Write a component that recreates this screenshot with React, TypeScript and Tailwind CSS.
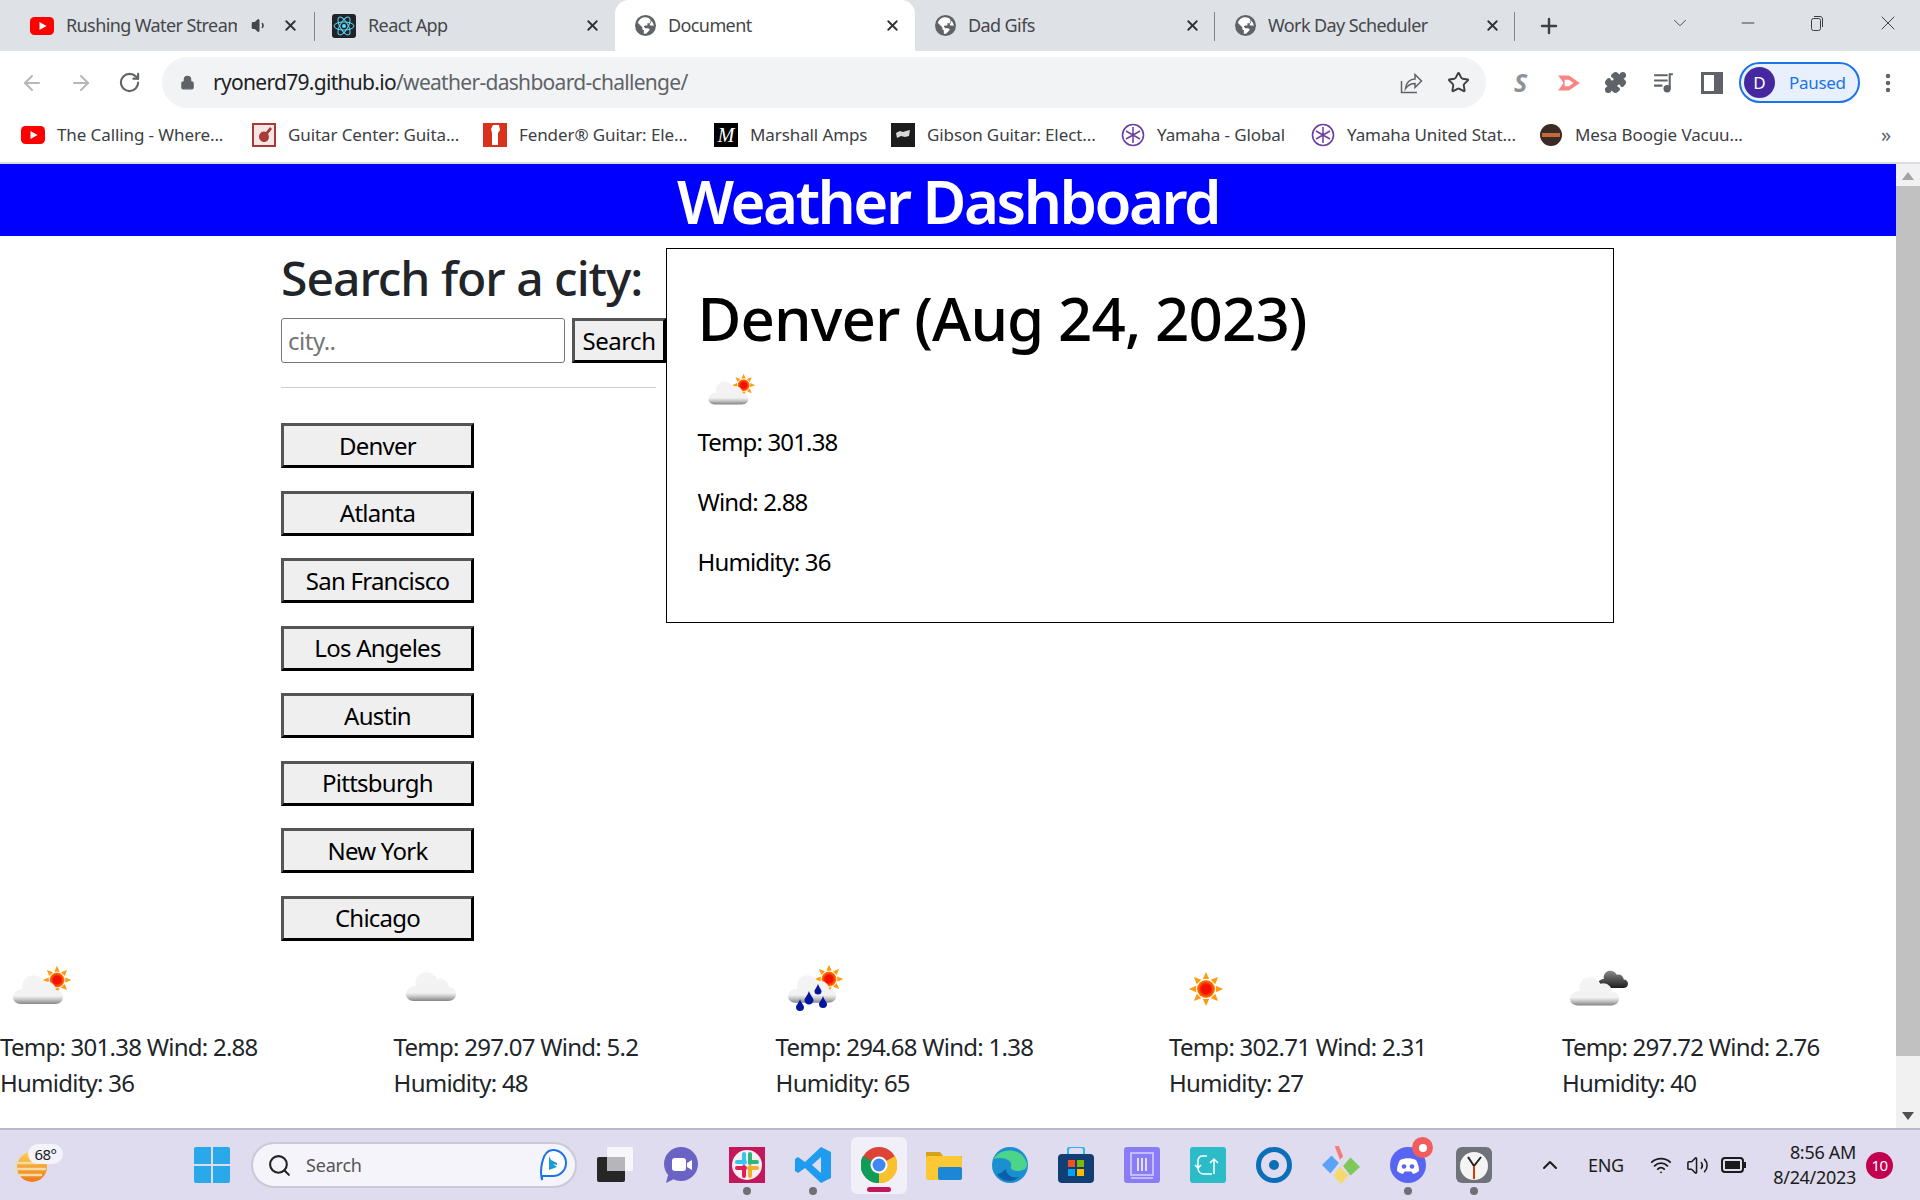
import { ArrowLeft, ArrowRight, ChevronDown, ChevronUp, Lock, Minus, MoreVertical, Plus, Puzzle, RotateCw, Search, Star, Volume1, Volume2, Wifi, X } from 'lucide-react'

type Kind = 'few' | 'scattered' | 'rain' | 'clear' | 'broken'

const cloudPath = 'M8 30H42C47 30 50 27 50 23C50 19 47 16 43 16C42 9 36 6 31 8C28 1 18 -1 13 4C9 8 9 12 10 15C4 15 0 19 0 23C0 27 3 30 8 30Z'

function Cloud({ x, y, scale = 1, dark = false }: { x: number; y: number; scale?: number; dark?: boolean }) {
  return <path d={cloudPath} transform={`translate(${x} ${y}) scale(${scale})`} fill={dark ? 'url(#cloud-dark)' : 'url(#cloud-light)'} />
}

function Sun({ cx, cy, r }: { cx: number; cy: number; r: number }) {
  const rays = [0, 45, 90, 135, 180, 225, 270, 315]
  return (
    <g>
      {rays.map((a) => (
        <polygon key={a} points={`${cx - r * 0.35},${cy - r * 1.1} ${cx},${cy - r * 1.9} ${cx + r * 0.35},${cy - r * 1.1}`} fill="#ff9a12" transform={`rotate(${a} ${cx} ${cy})`} />
      ))}
      <circle cx={cx} cy={cy} r={r} fill="url(#sun-core)" />
    </g>
  )
}

function WeatherIcon({ kind, size = 75 }: { kind: Kind; size?: number }) {
  return (
    <svg width={size} height={size} viewBox="0 0 75 75" className="block shrink-0">
      <defs>
        <linearGradient id="cloud-light" x1="0" y1="0" x2="0" y2="1">
          <stop offset="0" stopColor="#f4f4f4" />
          <stop offset="0.72" stopColor="#f2f2f2" />
          <stop offset="0.84" stopColor="#c8c8c8" />
          <stop offset="1" stopColor="#858585" />
        </linearGradient>
        <linearGradient id="cloud-dark" x1="0" y1="0" x2="0" y2="1">
          <stop offset="0" stopColor="#8a8a8a" />
          <stop offset="1" stopColor="#1d1d1d" />
        </linearGradient>
        <radialGradient id="sun-core">
          <stop offset="0.5" stopColor="#f50f00" />
          <stop offset="1" stopColor="#ff8a00" />
        </radialGradient>
      </defs>
      {kind === 'few' && (
        <>
          <Sun cx={57} cy={29} r={7.5} />
          <Cloud x={13} y={23} />
        </>
      )}
      {kind === 'scattered' && <Cloud x={12} y={20} />}
      {kind === 'rain' && (
        <>
          <Sun cx={53} cy={28} r={7.5} />
          <Cloud x={12} y={23} scale={0.96} />
          {[
            [24, 56, 4],
            [33, 49, 4.500],
            [47, 53, 4],
            [42, 40, 3.500],
          ].map(([cx, cy, r]) => (
            <path key={`${cx}-${cy}`} d={`M${cx} ${cy - r * 2}C${cx + r * 0.3} ${cy - r} ${cx + r} ${cy - r * 0.4} ${cx + r} ${cy}A${r} ${r} 0 1 1 ${cx - r} ${cy}C${cx - r} ${cy - r * 0.4} ${cx - r * 0.3} ${cy - r} ${cx} ${cy - r * 2}Z`} fill="#07169e" />
          ))}
        </>
      )}
      {kind === 'clear' && <Sun cx={37} cy={38} r={9} />}
      {kind === 'broken' && (
        <>
          <Cloud x={36} y={19} scale={0.6} dark />
          <Cloud x={8} y={25} scale={0.98} />
        </>
      )}
    </svg>
  )
}

function GlobeIcon() {
  return (
    <svg width="21" height="21" viewBox="0 0 20 20" className="shrink-0">
      <circle cx="10" cy="10" r="10" fill="#5f6368" />
      <path d="M9 2.2C6 2.6 3.6 4.6 2.6 7.3L7 11.6V13c0 .8.6 1.4 1.4 1.4v3.3C9.2 18 10 17.9 10.8 17.7L14 14.4c0-1-.8-1.8-1.8-1.8H9.8L8.4 11l1-1h2.4V7.8h1.6c.7 0 1.3-.6 1.3-1.3V4.2C13.4 2.9 11.300 2 9 2.200Z" fill="#fff" />
      <path d="M15.600 5.400 14.800 8h-1l.6 2h2.400l1 .8c.1-2-.700-3.900-2.200-5.400Z" fill="#fff" />
    </svg>
  )
}

function YoutubeIcon() {
  return (
    <svg width="24" height="18" viewBox="0 0 24 18" className="shrink-0">
      <rect width="24" height="18" rx="4.500" fill="#f00" />
      <path d="M9.500 5v8l7-4z" fill="#fff" />
    </svg>
  )
}

function ReactIcon() {
  return (
    <svg width="24" height="24" viewBox="0 0 24 24" className="shrink-0">
      <rect width="24" height="24" rx="3" fill="#20232a" />
      <circle cx="12" cy="12" r="2" fill="#61dafb" />
      <g fill="none" stroke="#61dafb" strokeWidth="1">
        <ellipse cx="12" cy="12" rx="10" ry="4" />
        <ellipse cx="12" cy="12" rx="10" ry="4" transform="rotate(60 12 12)" />
        <ellipse cx="12" cy="12" rx="10" ry="4" transform="rotate(120 12 12)" />
      </g>
    </svg>
  )
}

const tabs = [
  { title: 'Rushing Water Stream', icon: <YoutubeIcon />, sound: true, iconClass: '', padding: 'pr-[16px]' },
  { title: 'React App', icon: <ReactIcon />, iconClass: 'ml-[2px]', padding: 'pr-[14px]' },
  { title: 'Document', icon: <GlobeIcon />, active: true, iconClass: 'ml-[5px]', padding: 'pr-[14px]' },
  { title: 'Dad Gifs', icon: <GlobeIcon />, iconClass: 'ml-[5px]', padding: 'pr-[14px]' },
  { title: 'Work Day Scheduler', icon: <GlobeIcon />, iconClass: 'ml-[5px]', padding: 'pr-[14px]' },
]

function TabBar() {
  return (
    <div className="flex h-[51px] shrink-0 items-center bg-[#dee1e6] pl-[15px] text-[18px] text-[#45474a]">
      {tabs.map((tab, i) => (
        <div key={tab.title} className={`flex h-full w-[300px] items-center pl-[15px] ${tab.padding} ${tab.active ? 'rounded-t-[14px] bg-white' : 'relative'}`}>
          <span className={`flex shrink-0 ${tab.iconClass}`}>{tab.icon}</span>
          <span className="ml-[12px] min-w-0 flex-1 overflow-hidden whitespace-nowrap tracking-[-0.6px]">{tab.title}</span>
          {tab.sound && <Volume1 size={17} fill="#45474a" className="ml-[14px] mr-[14px] shrink-0" />}
          <X size={17} strokeWidth={2.6} className="shrink-0 text-[#303134]" />
          {(i === 0 || i === 3 || i === 4) && <span className="absolute right-0 top-[12px] h-[29px] w-px bg-[#80868b]" />}
        </div>
      ))}
      <Plus size={24} strokeWidth={2.4} className="ml-[22px] text-[#3c4043]" />
      <div className="ml-auto flex items-center pb-[6px] text-[#3c4043]">
        <ChevronDown size={22} strokeWidth={1} className="mr-[47px]" />
        <Minus size={20} strokeWidth={1.2} className="mr-[50px]" />
        <svg width="18" height="18" viewBox="0 0 18 18" fill="none" stroke="currentColor" className="mr-[50px]">
          <rect x="3.500" y="4.500" width="9" height="12" rx="2" />
          <path d="M6 2.500h6c1.500 0 2.500 1 2.500 2.500v8" />
        </svg>
        <X size={24} strokeWidth={1} className="mr-[20px]" />
      </div>
    </div>
  )
}

function Toolbar() {
  return (
    <div className="flex h-[62px] shrink-0 items-center bg-white pl-[20px] pr-[20px] pt-[1px] text-[#5f6368]">
      <ArrowLeft size={24} strokeWidth={2} className="text-[#b5b7ba]" />
      <ArrowRight size={24} strokeWidth={2} className="ml-[25px] text-[#b5b7ba]" />
      <RotateCw size={23} strokeWidth={2.2} className="ml-[25px] text-[#5f6368]" />
      <div className="ml-[21px] flex h-[51px] w-[1324px] items-center rounded-full bg-[#f1f3f4] pl-[18px] pr-[16px]">
        <Lock size={15} fill="#5f6368" className="shrink-0" />
        <span className="ml-[18px] whitespace-nowrap text-[21px] tracking-[-0.7px]">
          <span className="text-[#202124]">ryonerd79.github.io</span>/weather-dashboard-challenge/
        </span>
        <svg width="24" height="24" viewBox="0 0 24 24" fill="none" stroke="#5f6368" strokeWidth="1.500" className="ml-auto">
          <path d="M2.500 10v11.500h15.500" />
          <path d="M6.500 17.500c.5-6 4.500-9.500 9.500-9.500V3.500l6.500 6.500-6.500 6.500V12.500c-4 0-7 1.500-9.500 5z" />
        </svg>
        <Star size={23} strokeWidth={2} className="ml-[24px] text-[#3c4043]" />
      </div>
      <span className="ml-[28px] w-[20px] text-[25px] font-bold italic text-[#8e9195]">S</span>
      <svg width="26" height="26" viewBox="0 0 24 24" className="ml-[22px]">
        <path d="M2 5h10l10 7-10 7H2l5-7z" fill="#fb8585" />
        <path d="M8 9h4l4 3-4 3H8z" fill="#fff" />
      </svg>
      <Puzzle size={23} fill="#5f6368" className="ml-[22px]" />
      <svg width="25" height="25" viewBox="0 0 24 24" fill="none" stroke="#5f6368" strokeWidth="2" className="ml-[25px]">
        <path d="M2 5h13M2 10h13M2 15h8" />
        <path d="M20 4h-3v14" />
        <circle cx="14.500" cy="18" r="2.500" fill="#5f6368" />
      </svg>
      <svg width="22" height="22" viewBox="0 0 22 22" className="ml-[24px]">
        <path d="M0 0h22v22H0zM3 3v16h10V3z" fill="#5f6368" fillRule="evenodd" />
      </svg>
      <div className="ml-[16px] flex h-[41px] w-[121px] items-center rounded-full border-2 border-[#1a73e8] bg-[#e8f0fe] pl-[3px]">
        <span className="flex h-[31px] w-[31px] items-center justify-center rounded-full bg-[#4527a0] text-[17px] text-white">D</span>
        <span className="ml-[14px] text-[17px] tracking-[-0.3px] text-[#1a73e8]">Paused</span>
      </div>
      <MoreVertical size={24} strokeWidth={2.5} className="ml-[16px]" />
    </div>
  )
}

function GuitarCenterIcon() {
  return (
    <svg width="24" height="24" viewBox="0 0 24 24" className="shrink-0">
      <rect width="24" height="24" fill="#a83a3a" />
      <rect x="2" y="2" width="20" height="20" fill="#f4e6e2" />
      <path d="M7 14a5 5 0 0 1 7-5l4-5 2 2-4 5a5 5 0 1 1-9 3z" fill="#a83a3a" />
    </svg>
  )
}

function FenderIcon() {
  return (
    <svg width="24" height="24" viewBox="0 0 24 24" className="shrink-0">
      <rect width="24" height="24" fill="#d8321c" />
      <path d="M10 2h6l1 5-2 3v12H9V10L8 6z" fill="#fff" />
    </svg>
  )
}

function MarshallIcon() {
  return <span className="flex h-[24px] w-[24px] shrink-0 items-center justify-center bg-black font-['Liberation_Serif',serif] text-[20px] italic text-white">M</span>
}

function GibsonIcon() {
  return (
    <svg width="24" height="24" viewBox="0 0 24 24" className="shrink-0">
      <rect width="24" height="24" fill="#1c1c1c" />
      <path d="M5 10l4-2 3 1 3-1 4-1-1 6-4 1-4-1-4 2z" fill="#d8d8d8" />
    </svg>
  )
}

function YamahaIcon() {
  return (
    <svg width="24" height="24" viewBox="0 0 24 24" fill="none" stroke="#6b3fa0" className="shrink-0">
      <circle cx="12" cy="12" r="10.500" strokeWidth="1.600" />
      <path d="M12 4v16M5 8l14 8M19 8 5 16" strokeWidth="1.500" />
    </svg>
  )
}

const bookmarks = [
  { label: 'The Calling - Where...', icon: <YoutubeIcon />, width: 'w-[231px]' },
  { label: 'Guitar Center: Guita...', icon: <GuitarCenterIcon />, width: 'w-[231px]' },
  { label: 'Fender® Guitar: Ele...', icon: <FenderIcon />, width: 'w-[231px]' },
  { label: 'Marshall Amps', icon: <MarshallIcon />, width: 'w-[177px]' },
  { label: 'Gibson Guitar: Elect...', icon: <GibsonIcon />, width: 'w-[230px]' },
  { label: 'Yamaha - Global', icon: <YamahaIcon />, width: 'w-[190px]' },
  { label: 'Yamaha United Stat...', icon: <YamahaIcon />, width: 'w-[228px]' },
  {
    label: 'Mesa Boogie Vacuu...',
    icon: (
      <svg width="24" height="24" viewBox="0 0 24 24" className="shrink-0">
        <circle cx="12" cy="12" r="11" fill="#3b2a24" />
        <rect x="3" y="10" width="18" height="4" fill="#c06a3c" />
      </svg>
    ),
    width: 'w-[320px]',
  },
]

function BookmarksBar() {
  return (
    <div className="flex h-[51px] shrink-0 items-center border-b-2 border-[#dadce0] pb-[5px] pl-[21px] text-[17px] tracking-[-0.1px] text-[#3c4043]">
      {bookmarks.map((b) => (
        <div key={b.label} className={`flex items-center gap-[12px] whitespace-nowrap ${b.width}`}>
          {b.icon}
          <span>{b.label}</span>
        </div>
      ))}
      <span className="ml-auto mr-[29px] text-[20px] text-[#5f6368]">»</span>
    </div>
  )
}

const cities = ['Denver', 'Atlanta', 'San Francisco', 'Los Angeles', 'Austin', 'Pittsburgh', 'New York', 'Chicago']

const forecast: { kind: Kind; temp: string; wind: string; humidity: string; width: string }[] = [
  { kind: 'few', temp: '301.38', wind: '2.88', humidity: '36', width: 'w-[393.6px]' },
  { kind: 'scattered', temp: '297.07', wind: '5.2', humidity: '48', width: 'w-[382px]' },
  { kind: 'rain', temp: '294.68', wind: '1.38', humidity: '65', width: 'w-[393.4px]' },
  { kind: 'clear', temp: '302.71', wind: '2.31', humidity: '27', width: 'w-[393px]' },
  { kind: 'broken', temp: '297.72', wind: '2.76', humidity: '40', width: 'w-[334px]' },
]

function Dashboard() {
  return (
    <div className="flex min-w-0 flex-1 flex-col bg-white text-[24px] leading-[36px] text-[#212529]">
      <h1 className="h-[72px] shrink-0 bg-[#0000ff] text-center text-[60px] font-semibold leading-[75px] tracking-[-2.5px] text-white">Weather Dashboard</h1>
      <div className="flex h-[714px] shrink-0 pl-[281px]">
        <div className="w-[385px] shrink-0">
          <h2 className="mt-[11px] h-[71px] whitespace-nowrap text-[48px] font-medium leading-[62px] tracking-[-1px]">Search for a city:</h2>
          <div className="flex">
            <input placeholder="city.." className="h-[45px] w-[284px] rounded-[3px] border border-[#767676] bg-white px-[6px] text-[24px] tracking-[-0.5px] outline-none placeholder:text-[#757575]" readOnly />
            <button className="ml-[7px] h-[45px] w-[94px] border-[3px] border-b-black border-l-[#555] border-r-black border-t-[#555] bg-[#efefef] text-[24px] leading-none tracking-[-0.5px] text-black">Search</button>
          </div>
          <hr className="mr-[10px] mt-[24px] border-[#cfcfcf]" />
          <div className="mt-[35px] flex flex-col gap-[22.5px]">
            {cities.map((city) => (
              <button key={city} className="h-[45px] w-[193px] border-[3px] border-b-black border-l-[#555] border-r-black border-t-[#555] bg-[#efefef] text-[24px] leading-none tracking-[-0.75px] text-black">
                {city}
              </button>
            ))}
          </div>
        </div>
        <div className="mt-[12px] flex h-[375px] w-[948px] shrink-0 flex-col border-[1.5px] border-black pl-[30.500px] pt-[32.500px] text-[24px] tracking-[-0.85px] text-black">
          <h2 className="text-[60px] font-medium leading-[72px] tracking-[-0.9px]">Denver (Aug 24, 2023)</h2>
          <div className="mt-[8px]">
            <WeatherIcon kind="few" size={60} />
          </div>
          <p className="mt-[2px]">Temp: 301.38</p>
          <p className="mt-[24px]">Wind: 2.88</p>
          <p className="mt-[24px]">Humidity: 36</p>
        </div>
      </div>
      <div className="flex">
        {forecast.map((day) => (
          <div key={day.temp} className={`shrink-0 pt-[1px] tracking-[-0.75px] ${day.width}`}>
            <WeatherIcon kind={day.kind} />
            <p className="mt-[3px] whitespace-nowrap">
              Temp: {day.temp} Wind: {day.wind}
            </p>
            <p className="whitespace-nowrap">Humidity: {day.humidity}</p>
          </div>
        ))}
      </div>
    </div>
  )
}

function Scrollbar() {
  return (
    <div className="flex w-[24px] shrink-0 flex-col items-center bg-[#f1f1f1]">
      <span className="mt-[8px] h-0 w-0 border-x-[6px] border-b-[8px] border-x-transparent border-b-[#a3a3a3]" />
      <div className="mt-[6px] h-[870px] w-full bg-[#c1c1c1]" />
      <span className="mb-[8px] mt-auto h-0 w-0 border-x-[6px] border-t-[8px] border-x-transparent border-t-[#505050]" />
    </div>
  )
}

const appIcons = [
  <svg key="view" width="36" height="36" viewBox="0 0 36 36"><rect x="10" y="0" width="26" height="24" rx="2" fill="#f7f7f9" /><rect y="10" width="28" height="25" rx="2" fill="#262626" /><rect x="10" y="10" width="18" height="14" fill="#b5b5ba" /></svg>,
  <svg key="meet" width="36" height="36" viewBox="0 0 36 36"><ellipse cx="18" cy="17" rx="17" ry="17" fill="#6b63c4" /><path d="M5 28l-2 8 8-4z" fill="#6b63c4" /><rect x="9" y="11" width="14" height="13" rx="3" fill="#fff" /><path d="M24 16l5-3v10l-5-3z" fill="#fff" /></svg>,
  <svg key="slack" width="36" height="36" viewBox="0 0 36 36"><rect width="36" height="36" fill="#c2185b" /><circle cx="18" cy="18" r="15" fill="#f6eef0" /><path d="M15 7v9M8 15h8" stroke="#36c5f0" strokeWidth="4" strokeLinecap="round" /><path d="M21 7v9M21 15h7" stroke="#2eb67d" strokeWidth="4" strokeLinecap="round" /><path d="M21 29v-9M28 21h-8" stroke="#ecb22e" strokeWidth="4" strokeLinecap="round" /><path d="M15 29v-9M8 21h8" stroke="#e01e5a" strokeWidth="4" strokeLinecap="round" /></svg>,
  <svg key="code" width="36" height="36" viewBox="0 0 36 36"><path d="M26 0l10 5v26l-10 5-16-15-7 5-3-2V12l3-2 7 5zM26 10l-9 8 9 8z" fill="#1f9cf0" fillRule="evenodd" /></svg>,
]

const appIconsAfter = [
  <svg key="folder" width="36" height="36" viewBox="0 0 36 36"><path d="M0 5h14l3 4h19v6H0z" fill="#d9a21b" /><rect y="9" width="36" height="24" rx="2" fill="#fcc934" /><rect x="12" y="20" width="24" height="13" rx="2" fill="#1c87d6" /></svg>,
  <svg key="edge" width="36" height="38" viewBox="0 0 36 36"><circle cx="18" cy="18" r="18" fill="#1c8fd1" /><path d="M2 12C6 2 30-2 35 17c0 5-4 7-10 7-5 0-7-3-6-5 2-5-7-10-17-7z" fill="#4cd48b" /><path d="M14 22c0 6 7 10 13 8-6 6-17 5-22-3 2 0 6-2 9-5z" fill="#0a5fa8" /></svg>,
  <svg key="store" width="36" height="36" viewBox="0 0 36 36"><path d="M10 8V3c0-2 1-3 3-3h10c2 0 3 1 3 3v5" fill="none" stroke="#29b6f6" strokeWidth="2" /><rect y="7" width="36" height="29" rx="4" fill="#123f73" /><rect x="10" y="13" width="7" height="7" fill="#f25022" /><rect x="19" y="13" width="7" height="7" fill="#7fba00" /><rect x="10" y="22" width="7" height="7" fill="#00a4ef" /><rect x="19" y="22" width="7" height="7" fill="#ffb900" /></svg>,
  <svg key="mixer" width="36" height="36" viewBox="0 0 36 36"><rect width="36" height="36" rx="3" fill="#8a7cf6" /><rect x="7" y="6" width="22" height="22" fill="none" stroke="#d6d1ff" strokeWidth="1.500" /><path d="M14 11v13M18 11v13M22 11v13" stroke="#fff" strokeWidth="1.500" /><path d="M7 31h22" stroke="#d6d1ff" strokeWidth="1.500" /></svg>,
  <svg key="sync" width="36" height="36" viewBox="0 0 36 36"><rect width="36" height="36" rx="3" fill="#2bbcc8" /><path d="M17 9h-4c-3 0-5 2-5 5v7l-3-3M8 21l3-3M8 21c0 4 3 6 6 6h8" fill="none" stroke="#fff" strokeWidth="1.500" /><path d="M24 27V12M20 16l4-4 4 4" fill="none" stroke="#fff" strokeWidth="1.500" /></svg>,
  <svg key="ring" width="36" height="36" viewBox="0 0 36 36"><circle cx="18" cy="18" r="15.500" fill="none" stroke="#0a6fb8" strokeWidth="5" /><circle cx="18" cy="18" r="5" fill="#0a6fb8" /></svg>,
  <svg key="kite" width="38" height="38" viewBox="0 0 36 36"><path d="M12 0l4 0 4 10-3 3z" fill="#f47c7c" /><path d="M9 9L0 18l8 8 8-10z" fill="#5ba4f5" /><path d="M27 11l9 9-9 8-7-9z" fill="#7dc75b" /><path d="M17 20l8 8-7 8-7-8z" fill="#f5d96b" /></svg>,
]

function Taskbar() {
  return (
    <div className="flex h-[72px] shrink-0 items-center border-t-2 border-[#b9b9c9] bg-[#dedcee] text-[#1b1b1b]">
      <div className="relative ml-[15px] h-[30px] w-[34px] translate-y-[2px]">
        <svg width="34" height="30" viewBox="0 0 34 30">
          <defs>
            <linearGradient id="widget-sun" x1="0" y1="0" x2="0" y2="1">
              <stop offset="0" stopColor="#fbd04a" />
              <stop offset="1" stopColor="#f0781e" />
            </linearGradient>
          </defs>
          <ellipse cx="17" cy="15" rx="15" ry="15" fill="url(#widget-sun)" />
          <path d="M0 11h22M0 17h30M4 23h22" stroke="#f1dca6" strokeWidth="2.500" strokeLinecap="round" />
        </svg>
        <span className="absolute left-[13px] top-[-8px] flex h-[20px] w-[35px] items-center justify-center rounded-full bg-[#f4f3fa] text-[15px] tracking-[-0.5px]">68°</span>
      </div>
      <svg width="36" height="36" viewBox="0 0 36 36" className="ml-[145px]">
        <path d="M0 2a2 2 0 0 1 2-2h15v17H0zM19 0h15a2 2 0 0 1 2 2v15H19zM0 19h17v17H2a2 2 0 0 1-2-2zM19 19h17v15a2 2 0 0 1-2 2H19z" fill="#29a8ea" />
      </svg>
      <div className="ml-[21px] flex h-[46px] w-[326px] items-center rounded-full border-2 border-[#c9c9d8] bg-[#f4f4fa] pl-[14px] pr-[8px]">
        <Search size={25} strokeWidth={2} className="text-[#222]" />
        <span className="ml-[14px] text-[18px] tracking-[-0.2px] text-[#555]">Search</span>
        <svg width="28" height="34" viewBox="0 0 28 34" fill="none" className="ml-auto">
          <path d="M14 2a12 12 0 0 1 0 26H3v4C1 24 2 2 14 2Z" stroke="#1a73e8" strokeWidth="2" fill="#fff" />
          <path d="M10 8v14l8-3-4-3 4 1v-2l-6-3z" fill="#1a9bd8" />
        </svg>
      </div>
      <div className="ml-[20px] flex items-center gap-[30px]">
        {appIcons.map((icon, i) => (
          <div key={i} className="relative">
            {icon}
            {(i === 2 || i === 3) && <span className="absolute bottom-[-12px] left-[14px] h-[8px] w-[8px] rounded-full bg-[#6f6f78]" />}
          </div>
        ))}
      </div>
      <div className="relative ml-[20px] flex h-[57px] w-[56px] items-center justify-center rounded-[6px] bg-[#f1f0f8]">
        <svg width="36" height="36" viewBox="0 0 36 36">
          <circle cx="18" cy="18" r="18" fill="#db4437" />
          <path d="M18 18 34 9A18 18 0 0 1 18 36Z" fill="#fbc02d" />
          <path d="M18 18 18 36A18 18 0 0 1 2 9Z" fill="#0f9d58" />
          <circle cx="18" cy="18" r="8.500" fill="#fff" />
          <circle cx="18" cy="18" r="6.500" fill="#4285f4" />
        </svg>
        <span className="absolute bottom-[2px] left-[16px] h-[5px] w-[24px] rounded-full bg-[#c2185b]" />
      </div>
      <div className="ml-[19px] flex items-center gap-[30px]">
        {appIconsAfter.map((icon, i) => (
          <div key={i}>{icon}</div>
        ))}
        <div className="relative">
          <svg width="36" height="36" viewBox="0 0 36 36">
            <circle cx="18" cy="18" r="18" fill="#5865f2" />
            <path d="M10 13c5-2.500 11-2.500 16 0 2 3 3 7 3 11-2 1.500-4 2.500-6 3l-1.500-2.500h-7L13 27c-2-.5-4-1.500-6-3 0-4 1-8 3-11z" fill="#fff" />
            <circle cx="14" cy="19.500" r="2.300" fill="#5865f2" />
            <circle cx="22" cy="19.500" r="2.300" fill="#5865f2" />
          </svg>
          <span className="absolute right-[-7px] top-[-10px] flex h-[21px] w-[21px] items-center justify-center rounded-full bg-[#f25c5c]">
            <span className="h-[8px] w-[8px] rounded-full bg-white" />
          </span>
          <span className="absolute bottom-[-12px] left-[14px] h-[8px] w-[8px] rounded-full bg-[#6f6f78]" />
        </div>
        <div className="relative">
          <svg width="36" height="36" viewBox="0 0 36 36">
            <rect width="36" height="36" rx="6" fill="#6f7278" />
            <circle cx="18" cy="19" r="14" fill="#f4f4f4" />
            <path d="M18 19 12 10M18 19l7-9" stroke="#222" strokeWidth="2" />
            <path d="M18 19v13" stroke="#d83b01" strokeWidth="2" />
          </svg>
          <span className="absolute bottom-[-12px] left-[14px] h-[8px] w-[8px] rounded-full bg-[#6f6f78]" />
        </div>
      </div>
      <ChevronUp size={24} strokeWidth={2} className="ml-[46px]" />
      <span className="ml-[26px] text-[18px] tracking-[-0.3px]">ENG</span>
      <Wifi size={22} strokeWidth={2} className="ml-[26px]" />
      <Volume2 size={23} strokeWidth={1.6} className="ml-[14px]" />
      <svg width="26" height="16" viewBox="0 0 26 16" className="ml-[12px]">
        <rect x="1" y="1" width="21" height="14" rx="3" fill="none" stroke="#1b1b1b" strokeWidth="2" />
        <rect x="4" y="4" width="15" height="8" fill="#1b1b1b" />
        <rect x="23" y="5" width="2" height="6" fill="#1b1b1b" />
      </svg>
      <div className="ml-auto mr-[27px] flex items-center">
        <div className="text-right text-[18px] leading-[25px] tracking-[-0.3px]">
          <div>8:56 AM</div>
          <div>8/24/2023</div>
        </div>
        <span className="ml-[10px] flex h-[27px] w-[27px] items-center justify-center rounded-full bg-[#c2004f] text-[15px] tracking-[-0.5px] text-white">10</span>
      </div>
    </div>
  )
}

export default function App() {
  return (
    <div className="flex h-screen flex-col overflow-hidden bg-white font-['Noto_Sans','Open_Sans',sans-serif]">
      <TabBar />
      <Toolbar />
      <BookmarksBar />
      <div className="flex min-h-0 flex-1">
        <Dashboard />
        <Scrollbar />
      </div>
      <Taskbar />
    </div>
  )
}
